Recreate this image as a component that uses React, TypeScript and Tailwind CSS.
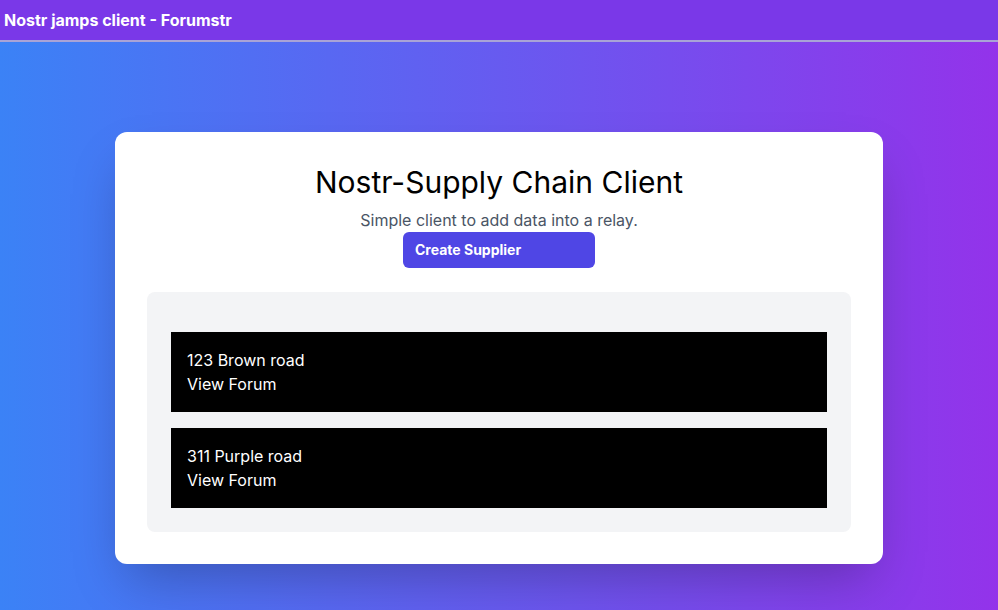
const suppliers = [
  { id: 1, name: "123 Brown road" },
  { id: 2, name: "311 Purple road" },
];

export default function App() {
  return (
    <div className="min-h-screen bg-[linear-gradient(to_right,#3b82f6,#9333ea)] font-['Inter',sans-serif]">
      <header className="h-[42px] bg-[#7a38e8] border-b-2 border-[#a9a3d6] flex items-center px-1">
        <h1 className="text-white font-bold text-base">Nostr jamps client - Forumstr</h1>
      </header>
      <main className="flex justify-center pt-[90px] pb-12">
        <div className="w-[768px] bg-white rounded-xl shadow-2xl p-8">
          <div className="flex flex-col items-center">
            <h2 className="text-3xl text-black">Nostr-Supply Chain Client</h2>
            <p className="mt-2 text-base text-gray-600">Simple client to add data into a relay.</p>
            <button className="w-48 h-9 rounded-md bg-[#4f46e5] text-white font-bold text-sm text-left pl-3">
              Create Supplier
            </button>
          </div>
          <div className="mt-6 bg-gray-100 rounded-lg px-6 pt-10 pb-6 flex flex-col gap-4">
            {suppliers.map((s) => (
              <div key={s.id} className="bg-black text-white px-4 py-4">
                <p>{s.name}</p>
                <p>View Forum</p>
              </div>
            ))}
          </div>
        </div>
      </main>
    </div>
  );
}
